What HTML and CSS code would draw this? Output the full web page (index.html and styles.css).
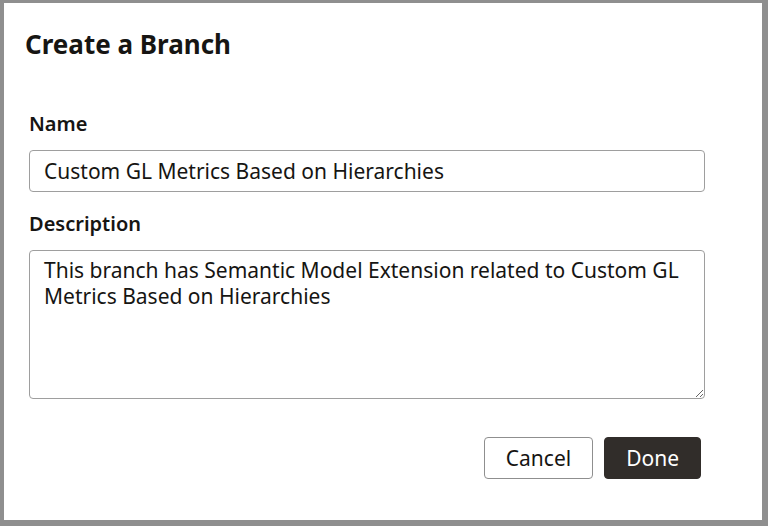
FILE: index.html
```html
<!DOCTYPE html>
<html lang="en">
<head>
    <meta charset="UTF-8">
    <meta name="viewport" content="width=device-width, initial-scale=1.0">
    <title>Create a Branch</title>
    <link rel="stylesheet" href="styles.css">
</head>
<body>
    <div class="dialog">
        <h2 class="title">Create a Branch</h2>
        <div class="field">
            <label for="branch-name">Name</label>
            <input type="text" id="branch-name" value="Custom GL Metrics Based on Hierarchies">
        </div>
        <div class="field">
            <label for="branch-desc">Description</label>
            <textarea id="branch-desc">This branch has Semantic Model Extension related to Custom GL Metrics Based on Hierarchies</textarea>
        </div>
        <div class="actions">
            <button class="btn btn-outline">Cancel</button>
            <button class="btn btn-dark">Done</button>
        </div>
    </div>
</body>
</html>
```

FILE: styles.css
```css
html, body {
    margin: 0;
    padding: 0;
    height: 100%;
}

body {
    font-family: "Noto Sans", "Open Sans", sans-serif;
    color: #161513;
    background: #fff;
    box-sizing: border-box;
    border-style: solid;
    border-color: #8f8f8f;
    border-width: 3px 6px 6px 4px;
}

.dialog {
    padding: 24px 0 0 21px;
}

.title {
    margin: 0 0 50px;
    font-size: 26px;
    font-weight: 700;
    line-height: 34px;
}

.field {
    padding-left: 4px;
    margin-bottom: 19px;
}

.field label {
    display: block;
    font-size: 20px;
    font-weight: 600;
    line-height: 26px;
    margin-bottom: 13px;
}

.field input,
.field textarea {
    display: block;
    box-sizing: border-box;
    width: 676px;
    font-family: inherit;
    font-size: 21px;
    color: #161513;
    border: 1px solid #9e9e9e;
    border-radius: 4px;
    padding: 0 14px;
    background: #fff;
}

.field input {
    height: 42px;
}

.field textarea {
    height: 149px;
    padding-top: 6px;
    line-height: 26px;
    resize: vertical;
}

.actions {
    display: flex;
    justify-content: flex-end;
    gap: 11px;
    margin-top: 38px;
    padding-right: 61px;
}

.btn {
    height: 42px;
    padding: 0 21px;
    font-family: inherit;
    font-size: 21px;
    border-radius: 4px;
    cursor: pointer;
}

.btn-outline {
    background: #fff;
    color: #161513;
    border: 1px solid #8f8f8f;
}

.btn-dark {
    background: #312d2a;
    color: #fff;
    border: 1px solid #312d2a;
}
```
